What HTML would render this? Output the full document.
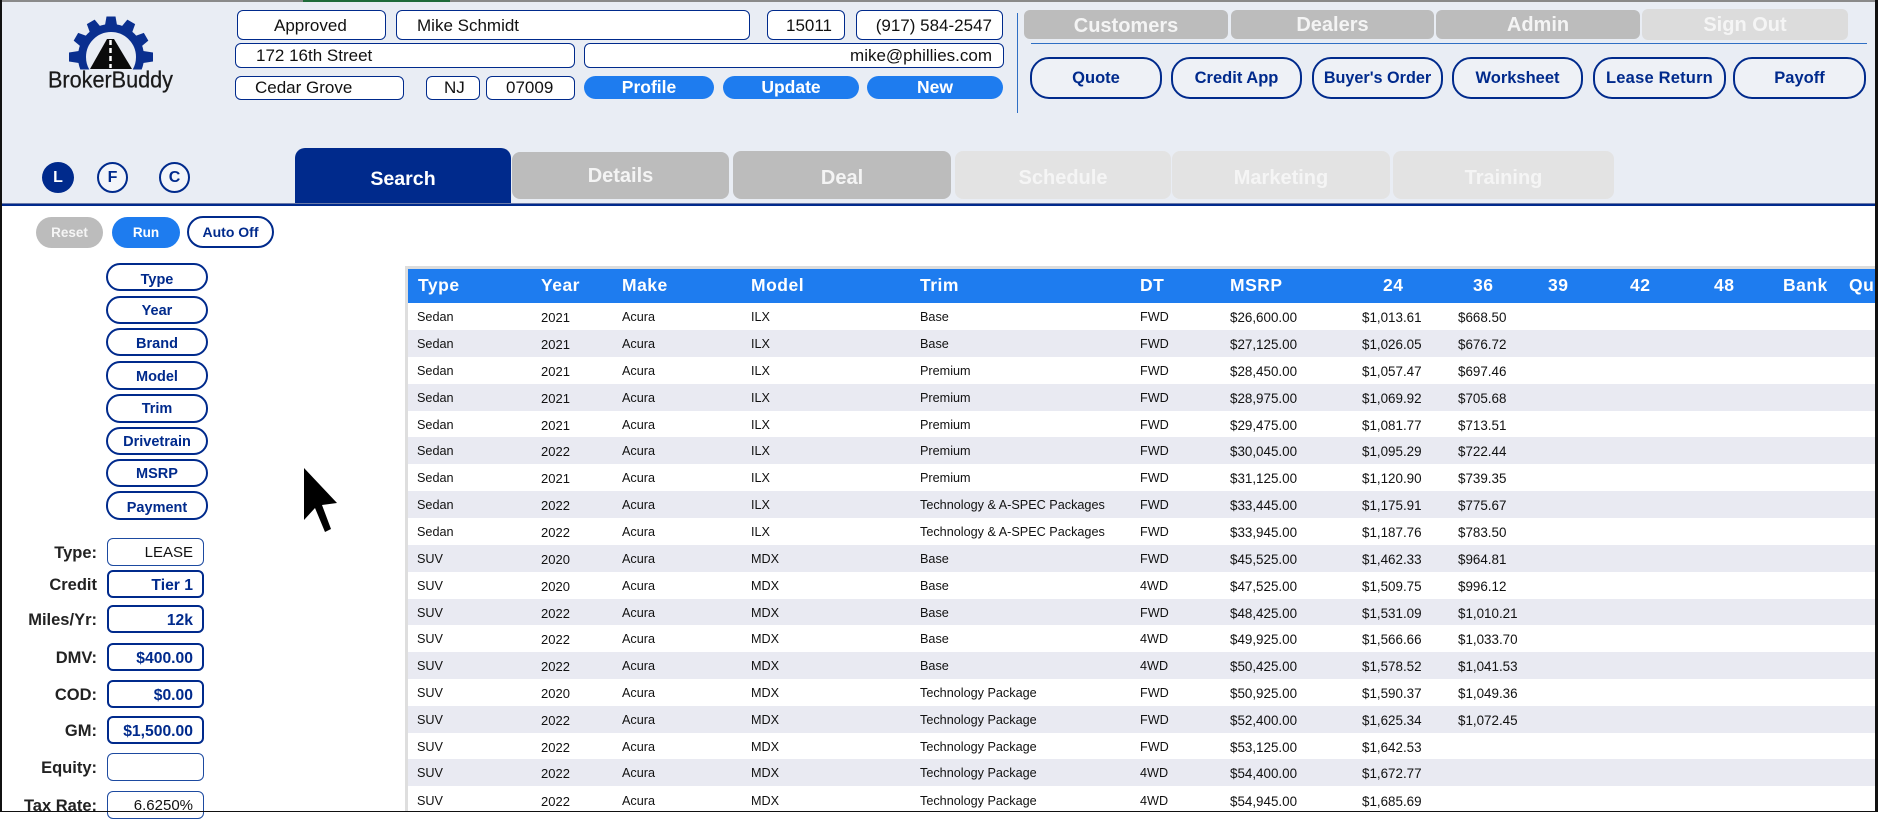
<!DOCTYPE html>
<html>
<head>
<meta charset="utf-8">
<style>
html,body{margin:0;padding:0;background:#fff}
body{width:1878px;height:812px;overflow:hidden;position:relative;font-family:"Liberation Sans",sans-serif}
#hd{position:absolute;left:0;top:2px;width:1878px;height:201px;background:#e9edf4}
.a{position:absolute;box-sizing:border-box;white-space:nowrap}
.bx{position:absolute;box-sizing:border-box;background:#fff;border:1.5px solid #002a8c;border-radius:6px;font-size:17px;color:#111;white-space:nowrap}
.bl{position:absolute;box-sizing:border-box;background:#1e7cef;border-radius:12px;color:#fff;font-weight:bold;font-size:17.5px;text-align:center;height:23px;line-height:23px;top:76px}
.g{position:absolute;box-sizing:border-box;background:#bcbcbc;border-radius:6px;color:#f4f4f4;font-weight:bold;font-size:20px;text-align:center}
.lg{background:#e3e3e3;color:#f5f5f5}
.q{position:absolute;box-sizing:border-box;top:57px;height:42px;border:2.5px solid #002a8c;border-radius:19px;color:#002a8c;font-weight:bold;font-size:16.5px;text-align:center;line-height:39px;white-space:nowrap;background:#eef1f6}
.c{position:absolute;box-sizing:border-box;top:162px;height:31px;border:2px solid #002a8c;border-radius:50%;color:#002a8c;font-weight:bold;font-size:16px;text-align:center;line-height:27px;background:#f3f5f9}
.f{position:absolute;box-sizing:border-box;left:106px;width:102px;border:2px solid #002a8c;border-radius:14px;color:#002a8c;font-weight:bold;font-size:14.5px;text-align:center;background:#fff}
.l{position:absolute;right:1781px;font-weight:bold;font-size:16.5px;color:#222;white-space:nowrap;line-height:30px}
.v{position:absolute;box-sizing:border-box;left:107px;width:97px;height:28px;border:2px solid #002a8c;border-radius:6px;color:#002a8c;font-weight:bold;font-size:15.7px;text-align:right;padding-right:9px;line-height:27px;background:#fff}
.v.t{border-width:1px;color:#111;font-weight:normal;font-size:15px;line-height:28px;padding-right:10px}
#tb{position:absolute;left:405px;top:266px;width:1470px;height:545px;overflow:hidden;background:#fff;border-left:3px solid #dedede;box-sizing:border-box}
#tt{position:absolute;left:0;top:0;width:100%;height:3px;background:#dcdcdc}
#th{position:absolute;left:0;top:3px;width:100%;height:34px;background:#1e7cef;color:#fff;font-weight:bold;font-size:17.5px;line-height:32px;letter-spacing:.5px}
#th span{position:absolute;top:0}
.r{position:absolute;left:0;width:100%;height:27px;line-height:29px;font-size:12.65px;color:#111;background:#fff}
.r.o{background:#e9eaf2}
.r span{position:absolute;top:0;white-space:nowrap}
.r span:nth-child(1){left:9px}
.r span:nth-child(2){left:133px;font-size:13px}
.r span:nth-child(3){left:214px}
.r span:nth-child(4){left:343px}
.r span:nth-child(5){left:512px}
.r span:nth-child(6){left:732px}
.r span:nth-child(7){left:822px;font-size:13.4px}
.r span:nth-child(8){left:954px;font-size:13.4px}
.r span:nth-child(9){left:1050px;font-size:13.4px}
</style>
</head>
<body>
<div id="hd"></div>
<div class="a" style="left:0;top:0;width:1878px;height:2px;background:#8a8a8a"></div>
<div class="a" style="left:303px;top:0;width:147px;height:2px;background:#1f6b3a"></div>

<!-- logo -->
<svg class="a" style="left:40px;top:10px" width="140" height="90" viewBox="40 10 140 90">
<defs><clipPath id="cp"><rect x="40" y="10" width="140" height="59.500"/></clipPath></defs>
<g clip-path="url(#cp)">
<circle cx="111" cy="57" r="29" fill="none" stroke="#0a2f8f" stroke-width="8"/>
<g fill="#0a2f8f">
<polygon points="104.500,28 117.500,28 115.500,16.500 106.500,16.500"/>
<polygon points="104.500,28 117.500,28 115.500,16.500 106.500,16.500" transform="rotate(-30 111 57)"/>
<polygon points="104.500,28 117.500,28 115.500,16.500 106.500,16.500" transform="rotate(30 111 57)"/>
<polygon points="104.500,28 117.500,28 115.500,16.500 106.500,16.500" transform="rotate(-60 111 57)"/>
<polygon points="104.500,28 117.500,28 115.500,16.500 106.500,16.500" transform="rotate(60 111 57)"/>
<polygon points="104.500,28 117.500,28 115.500,15 106.500,15" transform="rotate(-90 111 57)"/>
<polygon points="104.500,28 117.500,28 115.500,15 106.500,15" transform="rotate(90 111 57)"/>
</g>
</g>
<path d="M107 39 L114 39 L132 69 L90 69 Z" fill="#0b0b0b"/>
<path d="M110.500 40 V68" stroke="#fff" stroke-width="2.500" stroke-dasharray="5 3" fill="none"/>
<text x="48" y="87.500" font-family="Liberation Sans, sans-serif" font-size="23" fill="#1a1a1a" stroke="#1a1a1a" stroke-width=".25" textLength="125" lengthAdjust="spacingAndGlyphs">BrokerBuddy</text>
</svg>

<!-- customer block -->
<div class="bx" style="left:237px;top:10px;width:149px;height:30px;line-height:29px;padding-left:36px">Approved</div>
<div class="bx" style="left:396px;top:10px;width:354px;height:30px;line-height:29px;padding-left:20px">Mike Schmidt</div>
<div class="bx" style="left:767px;top:10px;width:78px;height:30px;line-height:29px;padding-left:18px">15011</div>
<div class="bx" style="left:856px;top:10px;width:147px;height:30px;line-height:29px;text-align:right;padding-right:10px">(917) 584-2547</div>
<div class="bx" style="left:235px;top:43px;width:340px;height:25px;line-height:24px;padding-left:20px">172 16th Street</div>
<div class="bx" style="left:584px;top:43px;width:420px;height:25px;line-height:24px;text-align:right;padding-right:11px">mike@phillies.com</div>
<div class="bx" style="left:235px;top:76px;width:169px;height:24px;line-height:21px;padding-left:19px">Cedar Grove</div>
<div class="bx" style="left:426px;top:76px;width:54px;height:24px;line-height:21px;padding-left:17px">NJ</div>
<div class="bx" style="left:486px;top:76px;width:89px;height:24px;line-height:21px;padding-left:19px">07009</div>
<div class="bl" style="left:584px;width:130px">Profile</div>
<div class="bl" style="left:723px;width:136px">Update</div>
<div class="bl" style="left:867px;width:136px">New</div>

<div class="a" style="left:1017px;top:13px;width:1px;height:100px;background:#2f6fc4"></div>

<!-- top nav -->
<div class="g" style="left:1024px;top:10px;width:204px;height:29px;line-height:33px">Customers</div>
<div class="g" style="left:1231px;top:10px;width:203px;height:29px;line-height:31px">Dealers</div>
<div class="g" style="left:1436px;top:10px;width:204px;height:29px;line-height:31px">Admin</div>
<div class="g" style="left:1642px;top:9px;width:206px;height:31px;line-height:32px;background:#dcdcdc;color:#f5f5f5">Sign Out</div>
<div class="a" style="left:1031px;top:43px;width:836px;height:1px;background:#2f6fc4"></div>

<div class="q" style="left:1030px;width:132px">Quote</div>
<div class="q" style="left:1171px;width:131px">Credit App</div>
<div class="q" style="left:1312px;width:131px;font-size:16.2px">Buyer's Order</div>
<div class="q" style="left:1452px;width:131px">Worksheet</div>
<div class="q" style="left:1593px;width:133px;letter-spacing:.2px">Lease Return</div>
<div class="q" style="left:1733px;width:133px">Payoff</div>

<!-- mode circles -->
<div class="c" style="left:42px;width:32px;background:#002a8c;color:#fff">L</div>
<div class="c" style="left:97px;width:31px">F</div>
<div class="c" style="left:159px;width:31px">C</div>

<!-- tabs -->
<div class="a" style="left:295px;top:148px;width:216px;height:55px;background:#002a8c;border-radius:10px 10px 0 0;color:#fff;font-weight:bold;font-size:19.600px;text-align:center;line-height:62px">Search</div>
<div class="g" style="left:512px;top:152px;width:217px;height:47px;line-height:49px;border-radius:8px">Details</div>
<div class="g" style="left:733px;top:151px;width:218px;height:48px;line-height:54px;border-radius:8px">Deal</div>
<div class="g lg" style="left:955px;top:151px;width:216px;height:48px;line-height:54px;border-radius:8px">Schedule</div>
<div class="g lg" style="left:1172px;top:151px;width:218px;height:48px;line-height:54px;border-radius:8px">Marketing</div>
<div class="g lg" style="left:1393px;top:151px;width:221px;height:48px;line-height:54px;border-radius:8px">Training</div>

<div class="a" style="left:0;top:203px;width:1878px;height:1px;background:#6b7aa8"></div>
<div class="a" style="left:0;top:204px;width:1878px;height:2px;background:#002a8c"></div>

<!-- run controls -->
<div class="a" style="left:36px;top:217px;width:67px;height:31px;background:#bcbcbc;border-radius:16px;color:#f5f5f5;font-weight:bold;font-size:13.500px;text-align:center;line-height:31px">Reset</div>
<div class="a" style="left:112px;top:217px;width:68px;height:31px;background:#1e7cef;border-radius:16px;color:#fff;font-weight:bold;font-size:13.500px;text-align:center;line-height:31px">Run</div>
<div class="a" style="left:187px;top:216px;width:87px;height:32px;border:2px solid #002a8c;border-radius:16px;color:#002a8c;font-weight:bold;font-size:14px;text-align:center;line-height:28px">Auto Off</div>

<!-- sort buttons -->
<div class="f" style="top:263px;height:28px;line-height:30px">Type</div>
<div class="f" style="top:296px;height:28px;line-height:26px">Year</div>
<div class="f" style="top:328px;height:28px;line-height:29px">Brand</div>
<div class="f" style="top:361px;height:29px;line-height:29px">Model</div>
<div class="f" style="top:394px;height:29px;line-height:27px">Trim</div>
<div class="f" style="top:427px;height:28px;line-height:27px">Drivetrain</div>
<div class="f" style="top:459px;height:28px;line-height:27px">MSRP</div>
<div class="f" style="top:491px;height:29px;line-height:30px">Payment</div>

<!-- cursor -->
<svg class="a" style="left:300px;top:464px" width="42" height="72" viewBox="300 464 42 72">
<path d="M304 468 V520 L315 508 L325 532 L331 529 L322 505 L337 503 Z" fill="#000"/>
</svg>

<!-- parameters -->
<div class="l" style="top:538px">Type:</div>
<div class="v t" style="top:538px;border-color:#1d4aa0">LEASE</div>
<div class="l" style="top:570px">Credit</div>
<div class="v" style="top:570px">Tier 1</div>
<div class="l" style="top:605px">Miles/Yr:</div>
<div class="v" style="top:605px">12k</div>
<div class="l" style="top:643px">DMV:</div>
<div class="v" style="top:643px">$400.00</div>
<div class="l" style="top:680px">COD:</div>
<div class="v" style="top:680px">$0.00</div>
<div class="l" style="top:716px">GM:</div>
<div class="v" style="top:716px">$1,500.00</div>
<div class="l" style="top:753px">Equity:</div>
<div class="v t" style="top:753px;border-color:#1d4aa0"></div>
<div class="l" style="top:791px">Tax Rate:</div>
<div class="v t" style="top:791px;border-color:#1d4aa0">6.6250%</div>

<!-- table -->
<div id="tb">
<div id="tt"></div>
<div id="th">
<span style="left:10px">Type</span><span style="left:133px">Year</span><span style="left:214px">Make</span><span style="left:343px">Model</span><span style="left:512px">Trim</span><span style="left:732px">DT</span><span style="left:822px">MSRP</span><span style="left:975px">24</span><span style="left:1065px">36</span><span style="left:1140px">39</span><span style="left:1222px">42</span><span style="left:1306px">48</span><span style="left:1375px">Bank</span><span style="left:1441px">Qu</span>
</div>
<div class="r" style="top:37px"><span>Sedan</span><span>2021</span><span>Acura</span><span>ILX</span><span>Base</span><span>FWD</span><span>$26,600.00</span><span>$1,013.61</span><span>$668.50</span></div>
<div class="r o" style="top:64px"><span>Sedan</span><span>2021</span><span>Acura</span><span>ILX</span><span>Base</span><span>FWD</span><span>$27,125.00</span><span>$1,026.05</span><span>$676.72</span></div>
<div class="r" style="top:91px"><span>Sedan</span><span>2021</span><span>Acura</span><span>ILX</span><span>Premium</span><span>FWD</span><span>$28,450.00</span><span>$1,057.47</span><span>$697.46</span></div>
<div class="r o" style="top:118px"><span>Sedan</span><span>2021</span><span>Acura</span><span>ILX</span><span>Premium</span><span>FWD</span><span>$28,975.00</span><span>$1,069.92</span><span>$705.68</span></div>
<div class="r" style="top:145px"><span>Sedan</span><span>2021</span><span>Acura</span><span>ILX</span><span>Premium</span><span>FWD</span><span>$29,475.00</span><span>$1,081.77</span><span>$713.51</span></div>
<div class="r o" style="top:171px"><span>Sedan</span><span>2022</span><span>Acura</span><span>ILX</span><span>Premium</span><span>FWD</span><span>$30,045.00</span><span>$1,095.29</span><span>$722.44</span></div>
<div class="r" style="top:198px"><span>Sedan</span><span>2021</span><span>Acura</span><span>ILX</span><span>Premium</span><span>FWD</span><span>$31,125.00</span><span>$1,120.90</span><span>$739.35</span></div>
<div class="r o" style="top:225px"><span>Sedan</span><span>2022</span><span>Acura</span><span>ILX</span><span>Technology &amp; A-SPEC Packages</span><span>FWD</span><span>$33,445.00</span><span>$1,175.91</span><span>$775.67</span></div>
<div class="r" style="top:252px"><span>Sedan</span><span>2022</span><span>Acura</span><span>ILX</span><span>Technology &amp; A-SPEC Packages</span><span>FWD</span><span>$33,945.00</span><span>$1,187.76</span><span>$783.50</span></div>
<div class="r o" style="top:279px"><span>SUV</span><span>2020</span><span>Acura</span><span>MDX</span><span>Base</span><span>FWD</span><span>$45,525.00</span><span>$1,462.33</span><span>$964.81</span></div>
<div class="r" style="top:306px"><span>SUV</span><span>2020</span><span>Acura</span><span>MDX</span><span>Base</span><span>4WD</span><span>$47,525.00</span><span>$1,509.75</span><span>$996.12</span></div>
<div class="r o" style="top:333px"><span>SUV</span><span>2022</span><span>Acura</span><span>MDX</span><span>Base</span><span>FWD</span><span>$48,425.00</span><span>$1,531.09</span><span>$1,010.21</span></div>
<div class="r" style="top:359px"><span>SUV</span><span>2022</span><span>Acura</span><span>MDX</span><span>Base</span><span>4WD</span><span>$49,925.00</span><span>$1,566.66</span><span>$1,033.70</span></div>
<div class="r o" style="top:386px"><span>SUV</span><span>2022</span><span>Acura</span><span>MDX</span><span>Base</span><span>4WD</span><span>$50,425.00</span><span>$1,578.52</span><span>$1,041.53</span></div>
<div class="r" style="top:413px"><span>SUV</span><span>2020</span><span>Acura</span><span>MDX</span><span>Technology Package</span><span>FWD</span><span>$50,925.00</span><span>$1,590.37</span><span>$1,049.36</span></div>
<div class="r o" style="top:440px"><span>SUV</span><span>2022</span><span>Acura</span><span>MDX</span><span>Technology Package</span><span>FWD</span><span>$52,400.00</span><span>$1,625.34</span><span>$1,072.45</span></div>
<div class="r" style="top:467px"><span>SUV</span><span>2022</span><span>Acura</span><span>MDX</span><span>Technology Package</span><span>FWD</span><span>$53,125.00</span><span>$1,642.53</span></div>
<div class="r o" style="top:493px"><span>SUV</span><span>2022</span><span>Acura</span><span>MDX</span><span>Technology Package</span><span>4WD</span><span>$54,400.00</span><span>$1,672.77</span></div>
<div class="r" style="top:521px"><span>SUV</span><span>2022</span><span>Acura</span><span>MDX</span><span>Technology Package</span><span>4WD</span><span>$54,945.00</span><span>$1,685.69</span></div>
</div>

<!-- window edge -->
<div class="a" style="left:0;top:0;width:2px;height:812px;background:#111"></div>
<div class="a" style="left:1875px;top:0;width:3px;height:812px;background:#111"></div>
<div class="a" style="left:0;top:811px;width:1878px;height:1px;background:#111"></div>
</body>
</html>
